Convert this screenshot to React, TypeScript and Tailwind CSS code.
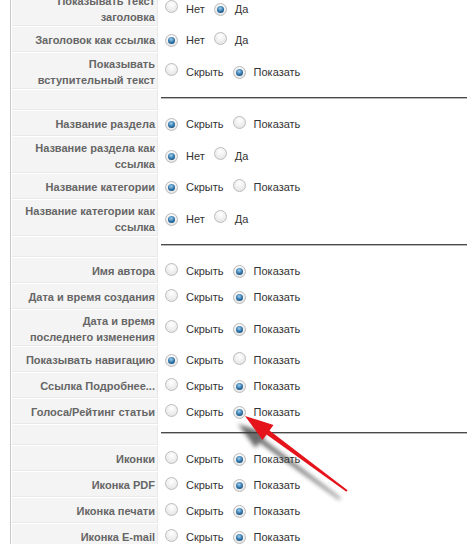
import React from 'react';

type Param = { label: string[]; options: [string, string]; checked: 0 | 1 };
type Row = Param | null;

const yesNo: [string, string] = ['Нет', 'Да'];
const hideShow: [string, string] = ['Скрыть', 'Показать'];

// null = spacer row with a rule
const rows: Row[] = [
  { label: ['Показывать текст', 'заголовка'], options: yesNo, checked: 1 },
  { label: ['Заголовок как ссылка'], options: yesNo, checked: 0 },
  { label: ['Показывать', 'вступительный текст'], options: hideShow, checked: 1 },
  null,
  { label: ['Название раздела'], options: hideShow, checked: 0 },
  { label: ['Название раздела как', 'ссылка'], options: yesNo, checked: 0 },
  { label: ['Название категории'], options: hideShow, checked: 0 },
  { label: ['Название категории как', 'ссылка'], options: yesNo, checked: 0 },
  null,
  { label: ['Имя автора'], options: hideShow, checked: 1 },
  { label: ['Дата и время создания'], options: hideShow, checked: 1 },
  { label: ['Дата и время', 'последнего изменения'], options: hideShow, checked: 1 },
  { label: ['Показывать навигацию'], options: hideShow, checked: 0 },
  { label: ['Ссылка Подробнее...'], options: hideShow, checked: 1 },
  { label: ['Голоса/Рейтинг статьи'], options: hideShow, checked: 1 },
  null,
  { label: ['Иконки'], options: hideShow, checked: 1 },
  { label: ['Иконка PDF'], options: hideShow, checked: 1 },
  { label: ['Иконка печати'], options: hideShow, checked: 1 },
  { label: ['Иконка E-mail'], options: hideShow, checked: 1 },
];

const Radio: React.FC<{ checked: boolean }> = ({ checked }) => (
  <span className="inline-flex h-[13px] w-[13px] shrink-0 items-center justify-center rounded-full border border-[#bcbcbc] bg-[radial-gradient(circle_at_50%_30%,#ffffff,#e0e0e0)]">
    {checked && (
      <span className="h-[7px] w-[7px] rounded-full bg-[radial-gradient(circle_at_45%_35%,#9fd0f2,#2a6fa3_55%,#0f3d66)]" />
    )}
  </span>
);

const ParamRow: React.FC<{ p: Param }> = ({ p }) => {
  const tall = p.label.length > 1;
  return (
    <div className={`flex ${tall ? 'h-[36px]' : 'h-[25px]'}`}>
      <div className="flex w-[146px] shrink-0 flex-col items-end justify-center border-r border-b border-[#e9e9e9] bg-[#f4f4f4] pr-[2px] pt-[2px] text-right text-[11px] leading-[16px] font-bold text-[#666]">
        {p.label.map(l => (
          <span key={l} className="whitespace-nowrap">{l}</span>
        ))}
      </div>
      <div className="flex flex-1 items-center pt-[2px] text-[11px] text-[#333]">
        <span className="ml-[7px]"><Radio checked={p.checked === 0} /></span>
        <span className="ml-[8px]">{p.options[0]}</span>
        <span className="ml-[9px]"><Radio checked={p.checked === 1} /></span>
        <span className="ml-[8px]">{p.options[1]}</span>
      </div>
    </div>
  );
};

const Spacer: React.FC = () => (
  <div className="flex h-[20px]">
    <div className="w-[146px] shrink-0 border-r border-b border-[#e9e9e9] bg-[#f4f4f4]" />
    <div className="flex-1 pt-[7px] pl-[3px]">
      <div className="h-[2px] border-t border-[#4a4a4a] border-b border-b-[#b8b8b8]" />
    </div>
  </div>
);

const Arrow: React.FC = () => (
  <svg className="pointer-events-none absolute top-0 left-0" width="467" height="544" viewBox="0 0 467 544">
    <defs>
      <filter id="blur" x="-20%" y="-20%" width="140%" height="140%">
        <feGaussianBlur stdDeviation="2.2" />
      </filter>
    </defs>
    <g transform="translate(-7 8)" filter="url(#blur)" opacity="0.75">
      <polygon
        fill="#3a3a3a"
        points="245,416 273.5,425 269.5,430.5 347.6,490.2 346.4,491.8 266.5,434.5 262.5,440"
      />
    </g>
    <polygon
      fill="#e5131a"
      points="245,416 273.5,425 269.5,430.5 347.6,490.2 346.4,491.8 266.5,434.5 262.5,440"
    />
  </svg>
);

export default function App() {
  return (
    <div
      className="relative h-[544px] w-[467px] overflow-hidden bg-white"
      style={{ fontFamily: '"Liberation Sans", Arial, sans-serif' }}
    >
      <div className="mt-[-10px] ml-[10px] border-l border-[#c8c8c8] pl-px">
        <div className="flex flex-col gap-px">
          {rows.map((r, i) => (r ? <ParamRow key={i} p={r} /> : <Spacer key={i} />))}
        </div>
      </div>
      <Arrow />
    </div>
  );
}
